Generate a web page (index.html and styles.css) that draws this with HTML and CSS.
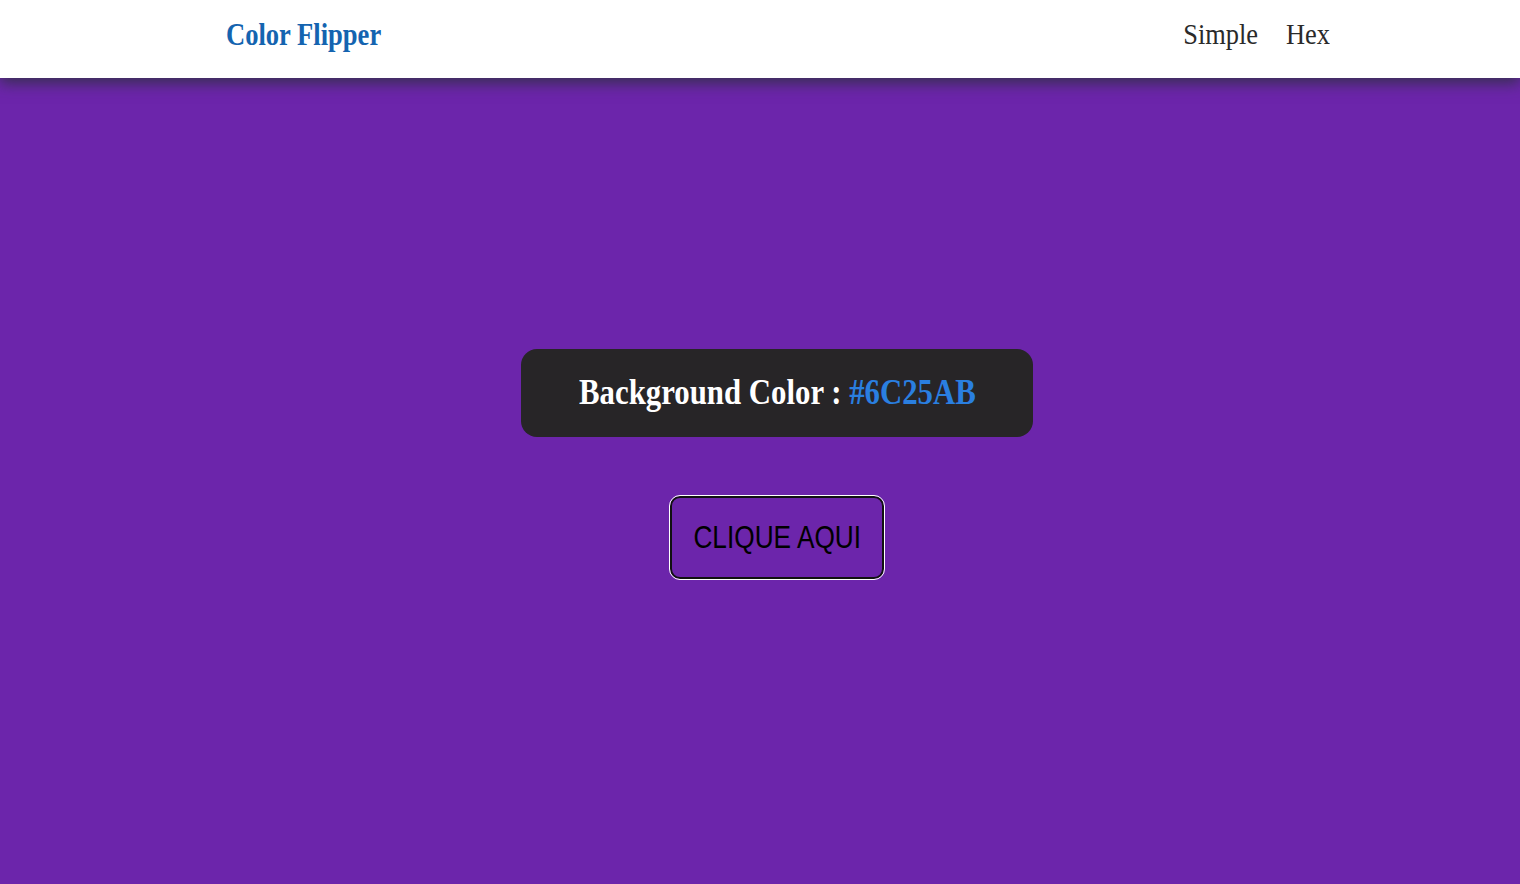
FILE: index.html
```html
<!DOCTYPE html>
<html lang="pt">
<head>
<meta charset="utf-8">
<title>Color Flipper</title>
<link rel="stylesheet" href="styles.css">
</head>
<body>
<nav class="navbar">
  <div class="nav-inner">
    <a class="brand" href="#"><span class="sx sx-left">Color Flipper</span></a>
    <ul class="nav-links">
      <li><a href="#"><span class="sx">Simple</span></a></li>
      <li><a href="#"><span class="sx">Hex</span></a></li>
    </ul>
  </div>
</nav>
<main class="main">
  <div class="color-box">
    <h2 class="color-title"><span class="sx">Background Color : <span class="hex">#6C25AB</span></span></h2>
  </div>
  <button class="btn" type="button"><span class="sx">CLIQUE AQUI</span></button>
</main>
</body>
</html>
```
FILE: styles.css
```css
* { box-sizing: border-box; }
html, body { margin: 0; padding: 0; height: 100%; }
body {
  background: #6C25AB;
  font-family: "Liberation Serif", "Times New Roman", serif;
  overflow: hidden;
}
.navbar {
  background: #ffffff;
  height: 78px;
  box-shadow: 0 5px 14px rgba(40, 50, 55, 0.8);
  position: relative;
  z-index: 1;
}
.nav-inner {
  height: 100%;
  margin-left: 226px;
  width: 1104px;
  padding-bottom: 10px;
  display: flex;
  align-items: center;
  justify-content: space-between;
}
.sx {
  display: inline-block;
  transform: scaleX(0.85);
  transform-origin: center;
  white-space: nowrap;
}
.brand {
  color: #1464b0;
  font-weight: bold;
  font-size: 32px;
  text-decoration: none;
  display: block;
}
.brand .sx { transform: scaleX(0.83); transform-origin: left center; }
.nav-links {
  list-style: none;
  margin: 0;
  padding: 0;
  display: flex;
  gap: 22px;
}
.nav-links a {
  color: #2a2a2a;
  font-size: 30px;
  text-decoration: none;
  display: block;
}
.nav-links .sx { transform: scaleX(0.88); transform-origin: right center; }
.main {
  display: flex;
  flex-direction: column;
  align-items: center;
  padding-top: 271px;
  padding-left: 34px;
  gap: 59px;
}
.color-box {
  width: 512px;
  height: 88px;
  background: #272527;
  border-radius: 16px;
  display: flex;
  align-items: center;
  justify-content: center;
}
.color-title {
  margin: 0;
  color: #ffffff;
  font-size: 35px;
  font-weight: bold;
}
.color-title .sx { transform: scaleX(0.88); }
.hex { color: #2a7fe0; }
.btn {
  width: 214px;
  height: 83px;
  background: transparent;
  border: 2px solid #111111;
  outline: 1px solid #ffffff;
  border-radius: 10px;
  font-family: "Liberation Sans", Arial, sans-serif;
  font-size: 32px;
  color: #000000;
  padding: 0;
  cursor: pointer;
}
.btn .sx { transform: scaleX(0.82); }
```
